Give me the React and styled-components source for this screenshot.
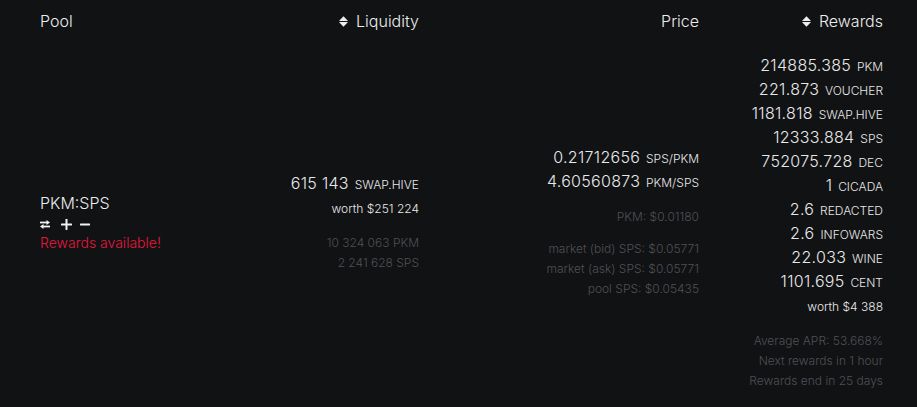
import React from "react";
import styled, { createGlobalStyle } from "styled-components";

const Global = createGlobalStyle`
  html, body { margin: 0; padding: 0; background: #111214; }
  body { font-family: Inter, "Noto Sans", sans-serif; font-weight: 300; color: #e8e8e9; -webkit-font-smoothing: antialiased; }
`;

const Table = styled.div`
  width: 917px;
  min-height: 407px;
  background: #111214;
  box-sizing: border-box;
  padding: 0 34px 0 40px;
`;

const Row = styled.div`
  display: grid;
  grid-template-columns: 200px 179px 280px 184px;
  align-items: center;
  padding: ${(p) => (p.$head ? "9px 0 9px" : "11px 0 16px")};
`;

const HeadCell = styled.div`
  display: flex;
  align-items: center;
  justify-content: ${(p) => (p.$right ? "flex-end" : "flex-start")};
  gap: 8px;
  font-size: 16px;
  line-height: 24px;
  color: #ededee;
`;

const Cell = styled.div`
  display: flex;
  flex-direction: column;
  align-items: ${(p) => (p.$right ? "flex-end" : "flex-start")};
  text-align: ${(p) => (p.$right ? "right" : "left")};
`;

const Main = styled.div`
  font-size: 16px;
  line-height: 24px;
  letter-spacing: 0.3px;
  color: #e8e8e9;
  white-space: nowrap;
`;

const Unit = styled.span`
  font-size: 12px;
  line-height: 1;
  letter-spacing: 0;
  margin-left: 1px;
`;

const Worth = styled.div`
  font-size: 12px;
  line-height: 24px;
  padding-top: 2px;
  color: #e8e8e9;
`;

const Dim = styled.div`
  margin-top: ${(p) => p.$gap || 0}px;
  display: flex;
  flex-direction: column;
  align-items: flex-end;
  font-size: 12px;
  line-height: 20px;
  color: #4f5054;
  white-space: nowrap;
`;

const PoolName = styled.div`
  font-size: 16px;
  line-height: 22px;
  color: #ececed;
`;

const Actions = styled.div`
  display: flex;
  align-items: center;
  height: 19px;
  padding-top: 2px;
  box-sizing: border-box;
  color: #f2f2f2;
`;

const ActionIcon = styled.span`
  display: inline-flex;
  margin-left: ${(p) => p.$gap || 0}px;
`;

const Alert = styled.div`
  font-size: 14px;
  line-height: 20px;
  font-weight: 350;
  color: #e8173d;
`;

const SortIcon = () => (
  <svg width="9" height="11" viewBox="0 0 9 11" fill="#ededee">
    <path d="M4.5 0.2 L8.6 4.4 Q9 4.9 8.3 4.9 H0.7 Q0 4.9 0.4 4.4 Z" />
    <path d="M0.7 6.1 H8.3 Q9 6.1 8.6 6.6 L4.5 10.8 L0.4 6.6 Q0 6.1 0.7 6.1 Z" />
  </svg>
);

const SwapIcon = () => (
  <svg width="10" height="9" viewBox="0 0 10 9" fill="#f2f2f2">
    <rect x="0" y="1.6" width="7" height="1.8" />
    <path d="M10 2.5 L6.5 0 V5 Z" />
    <rect x="3" y="5.6" width="7" height="1.8" />
    <path d="M0 6.5 L3.5 4 V9 Z" />
  </svg>
);

const PlusIcon = () => (
  <svg width="11" height="11" viewBox="0 0 11 11" fill="#f2f2f2">
    <rect x="0" y="4.5" width="11" height="2" rx="0.4" />
    <rect x="4.5" y="0" width="2" height="11" rx="0.4" />
  </svg>
);

const MinusIcon = () => (
  <svg width="10" height="11" viewBox="0 0 10 11" fill="#f2f2f2">
    <rect x="0" y="4.5" width="10" height="2" rx="0.4" />
  </svg>
);

const rewards = [
  ["214885.385", "PKM"],
  ["221.873", "VOUCHER"],
  ["1181.818", "SWAP.HIVE"],
  ["12333.884", "SPS"],
  ["752075.728", "DEC"],
  ["1", "CICADA"],
  ["2.6", "REDACTED"],
  ["2.6", "INFOWARS"],
  ["22.033", "WINE"],
  ["1101.695", "CENT"],
];

export default function App() {
  return (
    <>
      <Global />
      <Table>
        <Row $head>
          <HeadCell>Pool</HeadCell>
          <HeadCell $right>
            <SortIcon />
            Liquidity
          </HeadCell>
          <HeadCell $right>Price</HeadCell>
          <HeadCell $right>
            <SortIcon />
            Rewards
          </HeadCell>
        </Row>
        <Row>
          <Cell>
            <PoolName>PKM:SPS</PoolName>
            <Actions>
              <ActionIcon>
                <SwapIcon />
              </ActionIcon>
              <ActionIcon $gap={11}>
                <PlusIcon />
              </ActionIcon>
              <ActionIcon $gap={8}>
                <MinusIcon />
              </ActionIcon>
            </Actions>
            <Alert>Rewards available!</Alert>
          </Cell>
          <Cell $right>
            <Main>
              615 143 <Unit>SWAP.HIVE</Unit>
            </Main>
            <Worth>worth $251 224</Worth>
            <Dim $gap={12}>
              <div>10 324 063 PKM</div>
              <div>2 241 628 SPS</div>
            </Dim>
          </Cell>
          <Cell $right>
            <Main>
              0.21712656 <Unit>SPS/PKM</Unit>
            </Main>
            <Main>
              4.60560873 <Unit>PKM/SPS</Unit>
            </Main>
            <Dim $gap={14}>
              <div>PKM: $0.01180</div>
            </Dim>
            <Dim $gap={12}>
              <div>market (bid) SPS: $0.05771</div>
              <div>market (ask) SPS: $0.05771</div>
              <div>pool SPS: $0.05435</div>
            </Dim>
          </Cell>
          <Cell $right>
            {rewards.map(([n, u], i) => (
              <Main key={i}>
                {n} <Unit>{u}</Unit>
              </Main>
            ))}
            <Worth>worth $4 388</Worth>
            <Dim $gap={12}>
              <div>Average APR: 53.668%</div>
              <div>Next rewards in 1 hour</div>
              <div>Rewards end in 25 days</div>
            </Dim>
          </Cell>
        </Row>
      </Table>
    </>
  );
}
